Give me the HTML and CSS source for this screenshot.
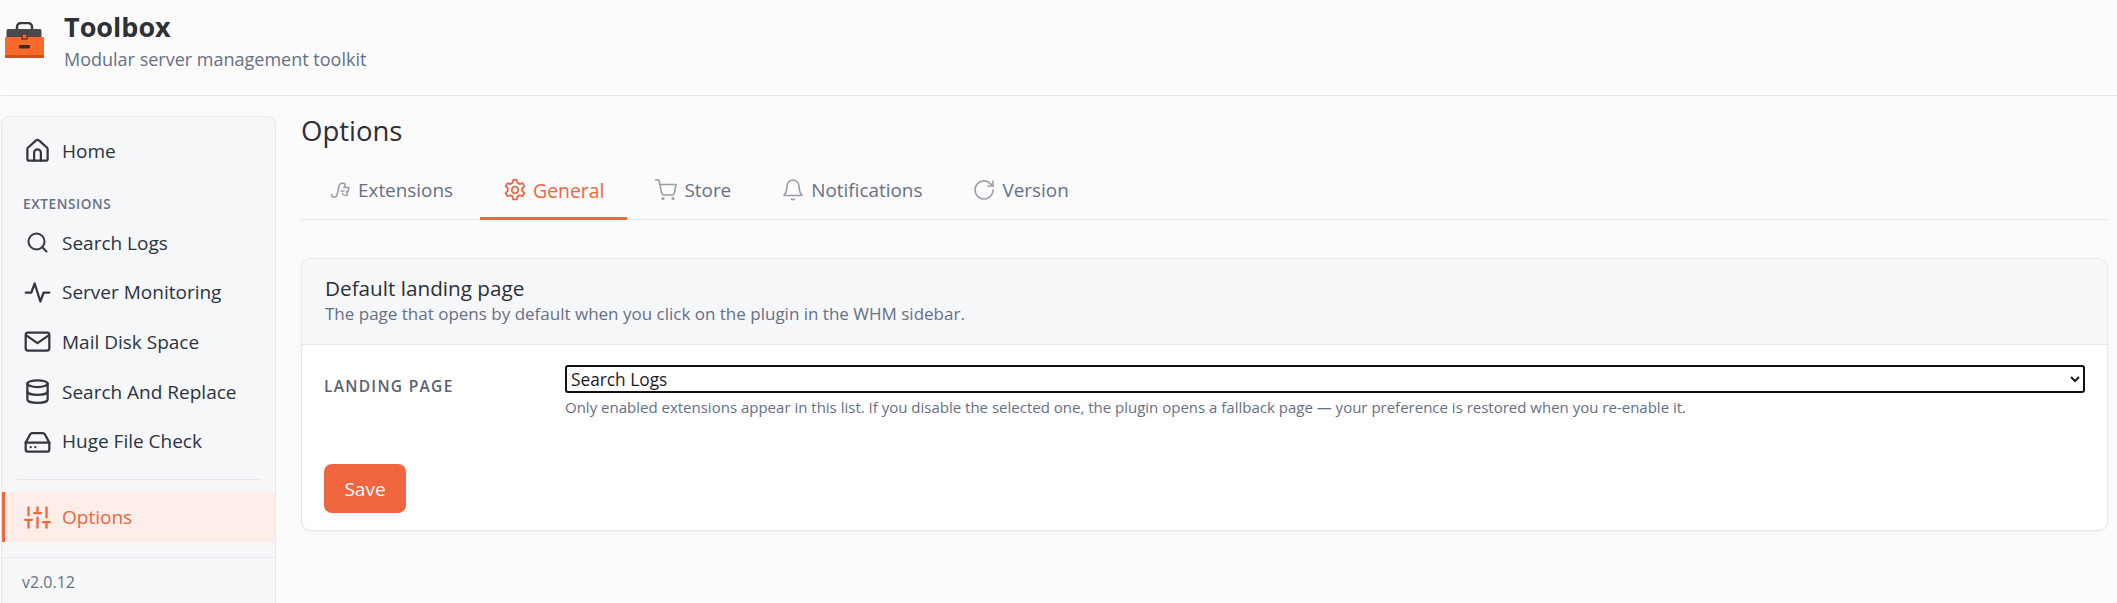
FILE: index.html

```html
<!DOCTYPE html>
<html lang="en">
<head>
  <meta charset="UTF-8">
  <meta name="viewport" content="width=device-width, initial-scale=1.0">
  <title>Toolbox - Options</title>
  <link rel="stylesheet" href="styles.css">
</head>
<body>
  <header class="topbar">
    <svg class="logo" viewBox="0 0 39 36">
      <path d="M12 8V5a4 4 0 0 1 4-4h7a4 4 0 0 1 4 4v3" fill="none" stroke="#3a3a3c" stroke-width="2.500"/>
      <path d="M3 7h32a1.500 1.500 0 0 1 1.500 1.500V15h-35V8.500A1.500 1.500 0 0 1 3 7z" fill="#4a4a4c"/>
      <path d="M1 15h37a1 1 0 0 1 1 1v19a1 1 0 0 1-1 1H1a1 1 0 0 1-1-1V16a1 1 0 0 1 1-1z" fill="#f96a2a"/>
      <rect y="33" width="39" height="3" rx="1" fill="#c9521f"/>
      <rect x="17" y="12" width="5" height="5" fill="#f96a2a" stroke="#4a3028" stroke-width="1.200"/>
      <rect x="14" y="23" width="11" height="3.500" rx="1" fill="#2f2f31"/>
    </svg>
    <div>
      <h1 class="brand">Toolbox</h1>
      <p class="tagline">Modular server management toolkit</p>
    </div>
  </header>

  <div class="layout">
    <aside class="sidebar">
      <nav class="side-nav">
        <a class="side-link">
          <svg class="icon" viewBox="0 0 24 24"><path d="M9 21v-7a3 3 0 0 1 6 0v7"/><path d="M4.500 21a1.500 1.500 0 0 1-1.500-1.500V10.800a2 2 0 0 1 .7-1.500l7-6.300a2.500 2.500 0 0 1 2.600 0l7 6.300a2 2 0 0 1 .7 1.500v8.700a1.500 1.500 0 0 1-1.500 1.500z"/></svg>
          Home
        </a>
        <div class="side-label">EXTENSIONS</div>
        <a class="side-link">
          <svg class="icon" viewBox="-1.500 -1.500 27 27"><circle cx="11" cy="11" r="8"/><path d="M21 21l-4.300-4.300"/></svg>
          Search Logs
        </a>
        <a class="side-link">
          <svg class="icon" viewBox="0 0 24 24"><path d="M1.500 12h5l3-8 5 16 3-8h5"/></svg>
          Server Monitoring
        </a>
        <a class="side-link">
          <svg class="icon" viewBox="0 0 24 24"><rect x="1.500" y="4" width="21" height="16" rx="2"/><path d="M2 6.500l10 7 10-7"/></svg>
          Mail Disk Space
        </a>
        <a class="side-link">
          <svg class="icon" viewBox="0 0 24 24"><ellipse cx="12" cy="5" rx="9" ry="3"/><path d="M3 5v14c0 1.700 4 3 9 3s9-1.300 9-3V5"/><path d="M3 12c0 1.700 4 3 9 3s9-1.300 9-3"/></svg>
          Search And Replace
        </a>
        <a class="side-link">
          <svg class="icon" viewBox="0 0 24 24"><path d="M22.500 13H1.500"/><path d="M5.500 5.500L1.500 13v6a2 2 0 0 0 2 2h17a2 2 0 0 0 2-2v-6l-4-7.500A2 2 0 0 0 16.700 4.500H7.300a2 2 0 0 0-1.800 1z"/><path d="M6 17h.01M10 17h.01"/></svg>
          Huge File Check
        </a>
        <div class="side-divider"></div>
        <a class="side-link active">
          <svg class="icon" viewBox="0 0 24 24"><path d="M4 21v-7M4 10V3M12 21v-9M12 8V3M20 21v-5M20 12V3M1 14h6M9 8h6M17 16h6"/></svg>
          Options
        </a>
      </nav>
      <div class="side-footer">v2.0.12</div>
    </aside>

    <main class="content">
      <h2 class="page-title">Options</h2>
      <div class="tabs">
        <a class="tab first">
          <svg class="tab-icon" viewBox="0 0 24 24"><path d="M3.500 16.500c0 3 4.500 4 5.500.5l2-9c.5-3 4-3.500 6-2 .5 1.500-.5 3-1 3.500h4.500c.5 2-.5 4-2 4.500 1.500 1.500 1 3.500-.5 3.500-2 0-3-1-3.500-2M13 13h3"/></svg>
          Extensions
        </a>
        <a class="tab active">
          <svg class="tab-icon" viewBox="1 1 22 22"><path d="M10.300 2.700h3.400l.6 2.800a7 7 0 0 1 1.900 1.100l2.700-.9 1.700 3-2.100 1.900a7 7 0 0 1 0 2.200l2.100 1.900-1.700 3-2.700-.9a7 7 0 0 1-1.900 1.100l-.6 2.800h-3.400l-.6-2.800a7 7 0 0 1-1.900-1.100l-2.700.9-1.700-3 2.100-1.900a7 7 0 0 1 0-2.200L3.400 8.700l1.700-3 2.700.9a7 7 0 0 1 1.900-1.100z"/><circle cx="12" cy="12" r="3"/></svg>
          General
        </a>
        <a class="tab">
          <svg class="tab-icon" viewBox="0 0 24 24"><circle cx="9" cy="20.500" r=".8"/><circle cx="19" cy="20.500" r=".8"/><path d="M1.500 2h3.500l2.700 13.400a2 2 0 0 0 2 1.600h8.700a2 2 0 0 0 2-1.600L22 6.500H6"/></svg>
          Store
        </a>
        <a class="tab">
          <svg class="tab-icon" viewBox="0 0 24 24"><path d="M6 8a6 6 0 0 1 12 0c0 7 2.500 8.500 3 9.500H3c.5-1 3-2.500 3-9.500"/><path d="M10.500 21a2 2 0 0 0 3 0"/></svg>
          Notifications
        </a>
        <a class="tab">
          <svg class="tab-icon" viewBox="0 0 24 24"><path d="M21 12a9 9 0 1 1-2.600-6.400L21 8"/><path d="M21 3v5h-5"/></svg>
          Version
        </a>
      </div>

      <section class="card">
        <div class="card-head">
          <h3>Default landing page</h3>
          <p>The page that opens by default when you click on the plugin in the WHM sidebar.</p>
        </div>
        <form class="card-body">
          <div class="field">
            <label class="field-label">LANDING PAGE</label>
            <div class="field-control">
              <select>
                <option>Search Logs</option>
                <option>Server Monitoring</option>
                <option>Mail Disk Space</option>
              </select>
              <p class="help">Only enabled extensions appear in this list. If you disable the selected one, the plugin opens a fallback page — your preference is restored when you re-enable it.</p>
            </div>
          </div>
          <button type="button" class="save">Save</button>
        </form>
      </section>
    </main>
  </div>
</body>
</html>
```

FILE: styles.css

```css
* { box-sizing: border-box; }
html, body { height: 100%; }
body {
  margin: 0;
  overflow: hidden;
  background: #fbfbfc;
  color: #2b2f38;
  font-family: "Open Sans", sans-serif;
}
h1, h2, h3, p { margin: 0; }

.topbar {
  display: flex;
  gap: 20px;
  height: 96px;
  margin-left: 1px;
  padding: 9px 0 0 4px;
  border-bottom: 1px solid #e5e7eb;
}
.logo { width: 39px; height: 36px; margin-top: 13px; }
.brand { font-size: 27px; font-weight: 700; line-height: 36px; color: #2f3136; }
.tagline { font-size: 18px; line-height: 24px; margin-top: 2px; color: #667085; }

.layout { display: flex; padding: 20px 9px 0 1px; gap: 25px; }

.sidebar {
  flex: 0 0 275px;
  height: 520px;
  background: #f6f7f9;
  border: 1px solid #e5e7eb;
  border-radius: 8px;
}
.side-nav { padding: 9px 0 15px; }
.side-link {
  display: flex;
  align-items: center;
  gap: 11px;
  height: 49.700px;
  padding-left: 22px;
  font-size: 19px;
  color: #2b3340;
}
.side-link.active {
  height: 50px;
  padding-left: 19px;
  border-left: 3px solid #ee6540;
  background: #fdeeea;
  color: #ee6540;
  font-weight: 500;
}
.icon {
  width: 27px;
  height: 27px;
  fill: none;
  stroke: currentColor;
  stroke-width: 2;
  stroke-linecap: round;
  stroke-linejoin: round;
  color: #33373e;
}
.active .icon { color: #ee6540; }
.side-label {
  margin: 17px 0 3px;
  padding-left: 21px;
  font-size: 13.600px;
  font-weight: 600;
  line-height: 22px;
  letter-spacing: .6px;
  color: #667085;
}
.side-divider { height: 1px; margin: 13px 15px 12px; background: #e5e7eb; }
.side-footer {
  padding: 13px 20px;
  border-top: 1px solid #e5e7eb;
  font-size: 16px;
  line-height: 22px;
  color: #667085;
}

.content { flex: 1; min-width: 0; }
.page-title { font-size: 27.500px; font-weight: 500; line-height: 34px; margin-top: -2px; color: #2b2f38; }
.tabs {
  display: flex;
  gap: 4px;
  height: 57px;
  margin-top: 15px;
  border-bottom: 1px solid #e5e7eb;
}
.tab {
  display: flex;
  align-items: center;
  gap: 6px;
  height: 57px;
  padding: 0 23px;
  font-size: 18.900px;
  color: #667085;
  border-bottom: 3px solid transparent;
}
.tab.first { padding-left: 27px; }
.tab.active { color: #ee6540; border-bottom-color: #ee6540; font-size: 19.400px; font-weight: 500; }
.tab-icon {
  width: 24px;
  height: 24px;
  fill: none;
  stroke: #9a9ea6;
  stroke-width: 1.600;
  stroke-linecap: round;
  stroke-linejoin: round;
}
.tab.active .tab-icon { stroke: #ee6540; }

.card {
  margin-top: 38px;
  background: #fff;
  border: 1px solid #e5e7eb;
  border-radius: 10px;
  box-shadow: 0 1px 3px rgba(0,0,0,0.05);
  overflow: hidden;
}
.card-head {
  height: 86px;
  padding: 15px 23px 0;
  background: #f6f7f9;
  border-bottom: 1px solid #e5e7eb;
}
.card-head h3 { font-size: 20.700px; font-weight: 500; line-height: 28px; color: #2b2f38; }
.card-head p { font-size: 17px; line-height: 22px; margin-top: 1px; color: #667085; }
.card-body { padding: 20px 22px 17px; }
.field { display: flex; }
.field-label {
  flex: 0 0 241px;
  padding-top: 10px;
  font-size: 15.500px;
  font-weight: 600;
  line-height: 22px;
  letter-spacing: 1.300px;
  color: #5a6270;
}
.field-control { flex: 1; }
select {
  display: block;
  width: 100%;
  height: 28px;
  padding: 0;
  background: #fff;
  border: 2px solid #111;
  border-radius: 3px;
  font-family: "Open Sans", sans-serif;
  font-size: 17.300px;
  color: #1c1c1e;
}
.help { font-size: 15px; line-height: 20px; margin-top: 4px; color: #667085; }
.save {
  display: block;
  width: 82px;
  height: 49px;
  margin-top: 47px;
  padding: 0;
  background: #ee6540;
  border: none;
  border-radius: 8px;
  font-family: "Open Sans", sans-serif;
  font-size: 19px;
  color: #fff;
}
```
